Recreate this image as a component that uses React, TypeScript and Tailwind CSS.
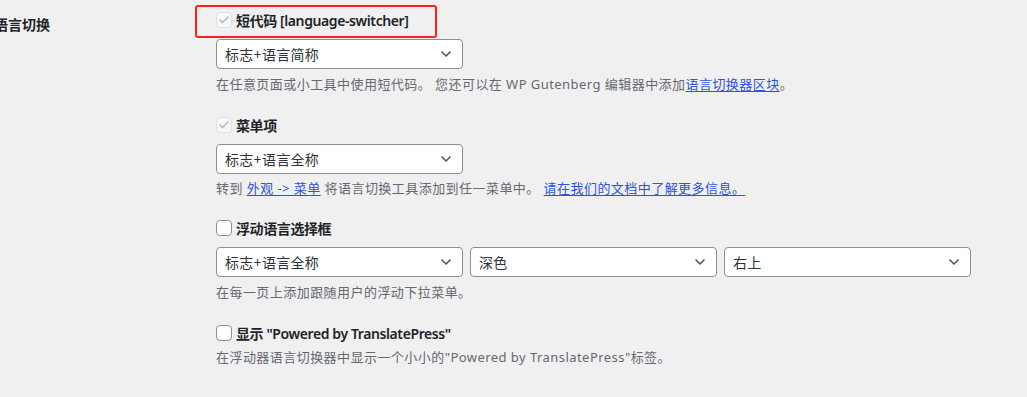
import React from "react";
import { ChevronDown, Check } from "lucide-react";

const font = { fontFamily: '"Noto Sans", "Noto Sans CJK SC", sans-serif' };

const Select: React.FC<{ value: string }> = ({ value }) => (
  <div className="w-[247px] h-[30px] flex items-center justify-between pl-2 pr-[8px] bg-white border border-[#8c8f94] rounded-[4px] text-[14px] tracking-[0.3px] text-[#2c3338]">
    <span>{value}</span>
    <ChevronDown className="w-4 h-4 text-[#50575e]" strokeWidth={2.5} />
  </div>
);

const CheckRow: React.FC<{ checked?: boolean; label: React.ReactNode }> = ({
  checked,
  label,
}) => (
  <div className="flex items-center h-5 gap-[4px]">
    {checked ? (
      <span className="w-4 h-4 flex items-center justify-center rounded-[4px] border border-[#e0e0e2] bg-[#f6f7f7]">
        <Check className="w-3 h-3 text-[#b4b6b9]" strokeWidth={3} />
      </span>
    ) : (
      <span className="w-4 h-4 rounded-[4px] border border-[#8c8f94] bg-white" />
    )}
    <span className="text-[14px] font-semibold tracking-[-0.4px] text-[#1d2327]">
      {label}
    </span>
  </div>
);

const Desc: React.FC<{ children: React.ReactNode; className?: string }> = ({
  children,
  className,
}) => (
  <p
    className={`text-[13px] leading-5 tracking-[0.45px] text-[#646970] ${className ?? ""}`}
  >
    {children}
  </p>
);

const A: React.FC<{ children: React.ReactNode }> = ({ children }) => (
  <a className="text-[#2c52e0] underline underline-offset-2">{children}</a>
);

export default function App() {
  return (
    <div
      className="w-[1027px] h-[397px] bg-[#f0f0f1] flex overflow-hidden"
      style={font}
    >
      <div className="w-[216px] shrink-0 pt-[12px]">
        <span className="ml-[-6px] text-[14px] font-semibold text-[#1d2327]">
          语言切换
        </span>
      </div>

      <div className="flex flex-col pt-[10px]">
        <div className="relative">
          <CheckRow checked label="短代码 [language-switcher]" />
          <div className="absolute left-[-21px] top-[-5px] w-[242px] h-[33px] border-2 border-[#ff1f1f] rounded-[3px]" />
        </div>
        <div className="mt-[9px]">
          <Select value="标志+语言简称" />
        </div>
        <Desc className="mt-[5px]">
          在任意页面或小工具中使用短代码。 您还可以在 WP Gutenberg 编辑器中添加
          <A>语言切换器区块</A>。
        </Desc>

        <div className="mt-[21px]">
          <CheckRow checked label="菜单项" />
        </div>
        <div className="mt-[9px]">
          <Select value="标志+语言全称" />
        </div>
        <Desc className="mt-[4px]">
          转到 <A>外观 -&gt; 菜单</A> 将语言切换工具添加到任一菜单中。{" "}
          <A>请在我们的文档中了解更多信息。</A>
        </Desc>

        <div className="mt-[20px]">
          <CheckRow label="浮动语言选择框" />
        </div>
        <div className="mt-[9px] flex gap-[7px]">
          <Select value="标志+语言全称" />
          <Select value="深色" />
          <Select value="右上" />
        </div>
        <Desc className="mt-[5px]">在每一页上添加跟随用户的浮动下拉菜单。</Desc>

        <div className="mt-[21px]">
          <CheckRow label={'显示 "Powered by TranslatePress"'} />
        </div>
        <Desc className="mt-[4px]">
          在浮动器语言切换器中显示一个小小的"Powered by TranslatePress"标签。
        </Desc>
      </div>
    </div>
  );
}
